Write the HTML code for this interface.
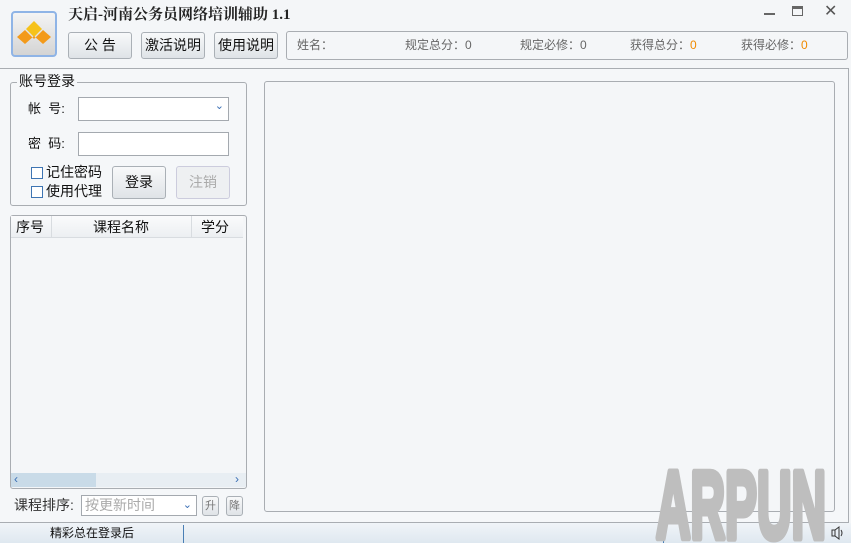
<!DOCTYPE html>
<html><head><meta charset="utf-8"><style>
*{margin:0;padding:0;box-sizing:border-box}
body{width:851px;height:543px;overflow:hidden;background:#f4f6f8;font-family:"Liberation Sans","Noto Sans CJK SC","WenQuanYi Zen Hei",sans-serif;font-size:13px;line-height:1.2;color:#111;position:relative}
.a{position:absolute}
.btn{position:absolute;border:1px solid #aab0b6;border-radius:3px;background:linear-gradient(#f8f9fa,#dfe3e7);font-size:14px;text-align:center;line-height:25px}
.grp{border:1px solid #a9adb2;border-radius:3px;background:#f5f7f9}
.inp{position:absolute;background:#fff;border:1px solid #a4a9af}
.cb{position:absolute;width:12px;height:12px;border:1px solid #3e75b3;background:#fff}
</style></head><body>
<div class="a" style="left:11px;top:11px;width:46px;height:46px;border:2px solid #8fb4e6;border-radius:4px;background:linear-gradient(#f4f4f4,#d4d4d4)">
<svg width="42" height="42" viewBox="0 0 42 42"><polygon points="21,8 29,16 21,24 13,16" fill="#f6c21a"/><polygon points="4,24 12,17 21,26 30,17 38,24 30,31 21,23 12,31" fill="#f39a1a"/></svg></div>
<div class="a" style="left:68px;top:6px;font-size:15px;font-weight:bold;font-family:'Liberation Serif','Noto Serif CJK SC',serif;color:#222">天启-河南公务员网络培训辅助 1.1</div>
<div class="btn" style="left:68px;top:32px;width:64px;height:27px">公 告</div>
<div class="btn" style="left:141px;top:32px;width:64px;height:27px">激活说明</div>
<div class="btn" style="left:214px;top:32px;width:64px;height:27px">使用说明</div>
<div class="a" style="left:286px;top:31px;width:562px;height:29px;border:1px solid #a9adb2;border-radius:3px;background:#f4f6f8;font-size:12px;color:#666;line-height:27px">
<span class="a" style="left:10px">姓名：</span><span class="a" style="left:118px">规定总分：0</span><span class="a" style="left:233px">规定必修：0</span><span class="a" style="left:343px">获得总分：<b style="color:#f08a00;font-weight:normal">0</b></span><span class="a" style="left:454px">获得必修：<b style="color:#f08a00;font-weight:normal">0</b></span></div>
<div class="a" style="left:764px;top:13px;width:11px;height:2px;background:#666"></div>
<div class="a" style="left:792px;top:6px;width:11px;height:10px;border:1px solid #666;border-top-width:3px"></div>
<div class="a" style="left:824px;top:2px;font-size:16px;color:#555">✕</div>
<div class="a" style="left:0;top:68px;width:849px;height:455px;border:1px solid #a9adb2;border-left:none;background:#f5f7f9"></div>
<div class="a grp" style="left:10px;top:82px;width:237px;height:124px"></div>
<div class="a" style="left:17px;top:73px;font-size:14px;background:#f5f7f9;padding:0 2px">账号登录</div>
<div class="a" style="left:28px;top:101px">帐&nbsp;&nbsp;号:</div>
<div class="inp" style="left:78px;top:97px;width:151px;height:24px"><span class="a" style="right:4px;top:2px;color:#3a6fb5;font-size:11px">⌄</span></div>
<div class="a" style="left:28px;top:136px">密&nbsp;&nbsp;码:</div>
<div class="inp" style="left:78px;top:132px;width:151px;height:24px"></div>
<div class="cb" style="left:31px;top:167px"></div><div class="a" style="left:46px;top:164px;font-size:14px">记住密码</div>
<div class="cb" style="left:31px;top:186px"></div><div class="a" style="left:46px;top:183px;font-size:14px">使用代理</div>
<div class="btn" style="left:112px;top:166px;width:54px;height:33px;line-height:31px">登录</div>
<div class="btn" style="left:176px;top:166px;width:54px;height:33px;line-height:31px;color:#aaa;background:#eef0f2;border-color:#ccd">注销</div>
<div class="a grp" style="left:10px;top:215px;width:237px;height:274px;background:#f4f6f8"></div>
<div class="a" style="left:11px;top:216px;width:232px;height:22px;background:linear-gradient(#fafbfc,#eceff2);border-bottom:1px solid #d8dce0;font-size:14px;line-height:22px">
<span class="a" style="left:5px">序号</span><span class="a" style="left:40px;top:0;width:1px;height:22px;background:#d8dce0"></span><span class="a" style="left:82px">课程名称</span><span class="a" style="left:180px;top:0;width:1px;height:22px;background:#d8dce0"></span><span class="a" style="left:190px">学分</span></div>
<div class="a" style="left:11px;top:473px;width:235px;height:14px;background:#e8eef3"><div class="a" style="left:0;top:0;width:85px;height:14px;background:#c9dbe8"></div><span class="a" style="left:3px;top:-1px;color:#3a6fb5;font-size:12px">‹</span><span class="a" style="left:224px;top:-1px;color:#3a6fb5;font-size:12px">›</span></div>
<div class="a" style="left:14px;top:497px;color:#333;font-size:14px">课程排序:</div>
<div class="inp" style="left:81px;top:495px;width:116px;height:21px;color:#aaa;font-size:14px;line-height:19px;padding-left:3px">按更新时间<span class="a" style="right:4px;top:0;color:#3a6fb5;font-size:11px">⌄</span></div>
<div class="btn" style="left:202px;top:496px;width:17px;height:20px;font-size:11px;line-height:18px;color:#777">升</div>
<div class="btn" style="left:226px;top:496px;width:17px;height:20px;font-size:11px;line-height:18px;color:#777">降</div>
<div class="a" style="left:264px;top:81px;width:571px;height:431px;border:1px solid #a9adb2;border-radius:3px;background:#f4f6f8"></div>
<div class="a" style="left:0;top:523px;width:851px;height:20px;background:linear-gradient(#f0f4f8,#dfe8f0)"></div>
<div class="a" style="left:50px;top:526px;font-size:12px">精彩总在登录后</div>
<div class="a" style="left:183px;top:525px;width:1px;height:18px;background:#4a7fb5"></div>
<div class="a" style="left:663px;top:525px;width:1px;height:18px;background:#4a7fb5"></div>
<svg class="a" style="left:830px;top:525px" width="16" height="16" viewBox="0 0 16 16"><rect x="2" y="5" width="3" height="6" fill="none" stroke="#333"/><path d="M5 5 L9 2 V14 L5 11" fill="none" stroke="#333"/><path d="M11 5 Q13 8 11 11" fill="none" stroke="#333"/></svg>
<svg class="a" style="left:650px;top:460px" width="185" height="83"><text x="6" y="78" font-family="Liberation Sans" font-weight="bold" font-size="96" textLength="170" lengthAdjust="spacingAndGlyphs" fill="#bebebe" stroke="#bebebe" stroke-width="7" stroke-linejoin="round">ARPUN</text></svg>
</body></html>
